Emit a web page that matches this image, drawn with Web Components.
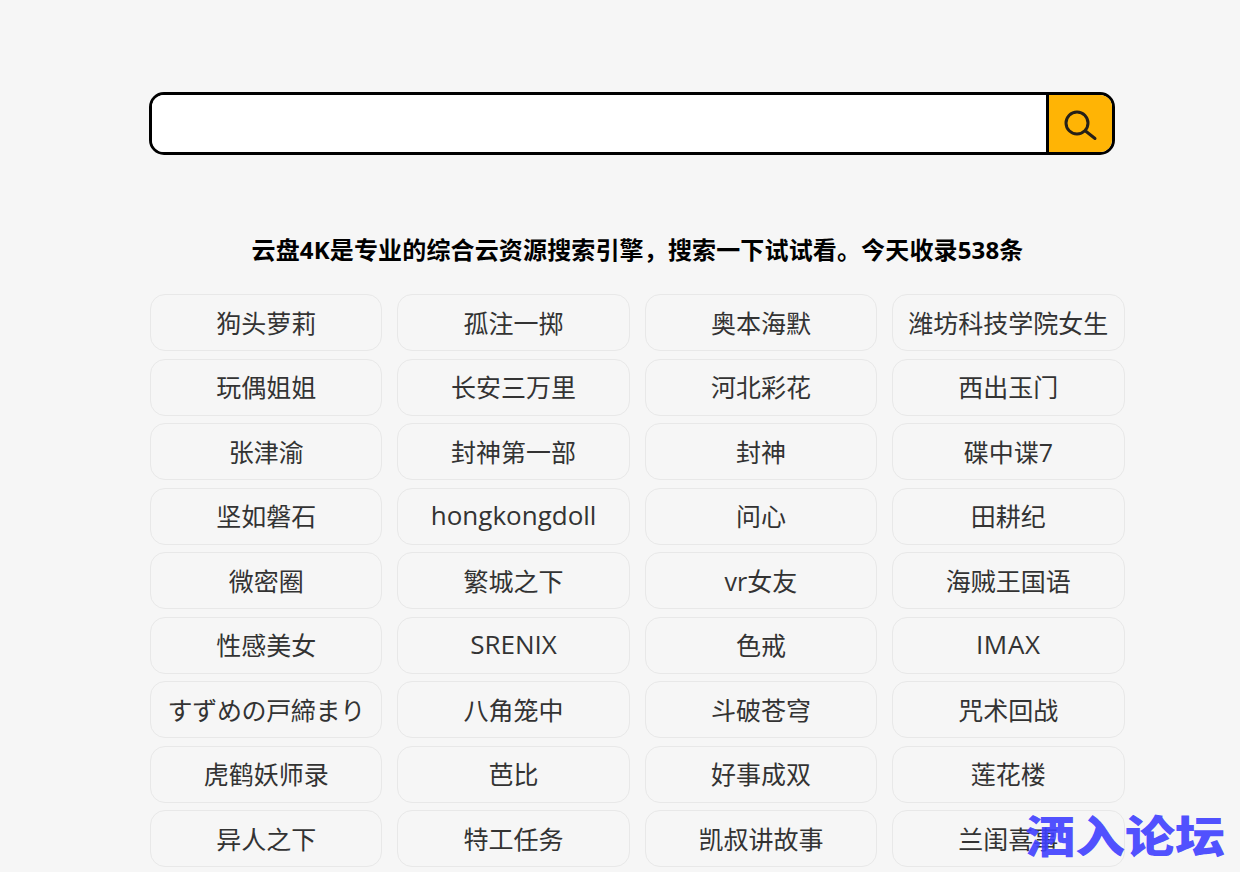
<!DOCTYPE html>
<html lang="zh"><head><meta charset="utf-8"><title>云盘4K</title>
<style>
html,body{margin:0;height:872px;overflow:hidden;background:#f6f6f6}
body{font-family:"Open Sans","Noto Sans CJK SC",sans-serif;position:relative}
main{display:block;padding:92px 115px 0 149px}
</style></head><body>
<main>
<search-box></search-box>
<intro-line>云盘4K是专业的综合云资源搜索引擎&#xFF0C;搜索一下试试看。今天收录538条</intro-line>
<tag-grid>
<tag-item>狗头萝莉</tag-item><tag-item>孤注一掷</tag-item><tag-item>奥本海默</tag-item><tag-item>潍坊科技学院女生</tag-item>
<tag-item>玩偶姐姐</tag-item><tag-item>长安三万里</tag-item><tag-item>河北彩花</tag-item><tag-item>西出玉门</tag-item>
<tag-item>张津渝</tag-item><tag-item>封神第一部</tag-item><tag-item>封神</tag-item><tag-item>碟中谍7</tag-item>
<tag-item>坚如磐石</tag-item><tag-item style="font-size:26px">hongkongdoll</tag-item><tag-item>问心</tag-item><tag-item>田耕纪</tag-item>
<tag-item>微密圈</tag-item><tag-item>繁城之下</tag-item><tag-item>vr女友</tag-item><tag-item>海贼王国语</tag-item>
<tag-item>性感美女</tag-item><tag-item style="font-size:26px">SRENIX</tag-item><tag-item>色戒</tag-item><tag-item style="font-size:26px;letter-spacing:.7px">IMAX</tag-item>
<tag-item style="letter-spacing:-.35px">すずめの戸締まり</tag-item><tag-item>八角笼中</tag-item><tag-item>斗破苍穹</tag-item><tag-item>咒术回战</tag-item>
<tag-item>虎鹤妖师录</tag-item><tag-item>芭比</tag-item><tag-item>好事成双</tag-item><tag-item>莲花楼</tag-item>
<tag-item>异人之下</tag-item><tag-item>特工任务</tag-item><tag-item>凯叔讲故事</tag-item><tag-item>兰闺喜事</tag-item>
</tag-grid>
</main>
<water-mark>洒入论坛</water-mark>
<script>
function def(name,html){customElements.define(name,class extends HTMLElement{constructor(){super();this.attachShadow({mode:"open"}).innerHTML=html}})}
def("search-box",`<style>
:host{display:flex;box-sizing:border-box;width:966px;height:63px;border:3px solid #000;border-radius:15px;overflow:hidden;background:#fff}
.input{flex:1;min-width:0;border:0;background:#fff;outline:0;padding:0 12px;font:24px "Open Sans","Noto Sans CJK SC",sans-serif}
.btn{flex:none;width:66px;box-sizing:border-box;border:0;border-left:3px solid #000;background:#ffb405;padding:0;display:flex;align-items:center;justify-content:center}
svg{display:block;width:38px;height:38px}
</style><input class="input" type="text" aria-label="搜索"><button class="btn" aria-label="搜索"><svg viewBox="0 0 38 38" fill="none" stroke="#262018"><circle cx="15" cy="18" r="11" stroke-width="3"/><path d="M23.5 26 33 33.5" stroke-width="3" stroke-linecap="round"/></svg></button>`);
def("intro-line",`<style>
:host{display:block;margin:77px 0 0 1px;width:975px;height:39px;line-height:35px;text-align:center;font-weight:700;font-size:24px;letter-spacing:.15px;color:#000}
</style><slot></slot>`);
def("tag-grid",`<style>
:host{display:grid;grid-template-columns:repeat(4,232.4px);column-gap:15px;row-gap:7.5px;margin:23px 0 0 1px;width:975px}
</style><slot></slot>`);
def("tag-item",`<style>
:host{display:flex;align-items:center;justify-content:center;box-sizing:border-box;height:57px;padding-bottom:2px;border:1px solid #e8e8e8;border-radius:15px;font-size:25px;color:#333;white-space:nowrap;overflow:hidden}
</style><slot></slot>`);
def("water-mark",`<style>
:host{position:absolute;left:1025px;top:806px;font:900 50px/56px "Noto Sans CJK SC",sans-serif;color:rgba(64,64,255,.92);white-space:nowrap;transform:scaleY(.88);transform-origin:0 50%}
</style><slot></slot>`);
</script>
</body></html>
